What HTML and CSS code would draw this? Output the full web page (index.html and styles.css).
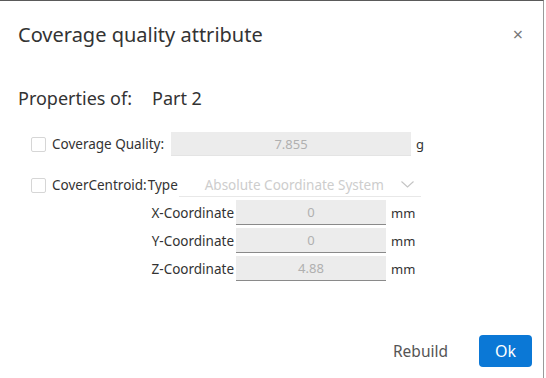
FILE: index.html
```html
<!DOCTYPE html>
<html lang="en">
<head>
    <meta charset="UTF-8">
    <title>Coverage quality attribute</title>
    <link rel="stylesheet" href="styles.css">
</head>
<body>
    <div class="dialog">
        <div class="dialog-header">
            <h2 class="dialog-title">Coverage quality attribute</h2>
            <span class="close-btn">&times;</span>
        </div>

        <div class="props-title">Properties of:<span class="part-name">Part 2</span></div>

        <div class="form-row">
            <span class="check"></span>
            <span class="row-label">Coverage Quality:</span>
            <div class="field field-wide">7.855</div>
            <span class="unit">g</span>
        </div>

        <div class="form-row row-centroid">
            <span class="check"></span>
            <span class="row-label">CoverCentroid:</span>
            <span class="type-label">Type</span>
            <div class="select">
                <span>Absolute Coordinate System</span>
                <svg class="chevron" width="13" height="7" viewBox="0 0 13 7"><path d="M0.5 0.5 L6.5 6 L12.5 0.5" fill="none" stroke="#c4c4c4" stroke-width="1.1"/></svg>
            </div>
        </div>

        <div class="coord-list">
            <div class="coord-row">
                <span class="coord-label">X-Coordinate</span>
                <div class="field field-coord">0</div>
                <span class="unit">mm</span>
            </div>
            <div class="coord-row">
                <span class="coord-label">Y-Coordinate</span>
                <div class="field field-coord">0</div>
                <span class="unit">mm</span>
            </div>
            <div class="coord-row">
                <span class="coord-label">Z-Coordinate</span>
                <div class="field field-coord">4.88</div>
                <span class="unit">mm</span>
            </div>
        </div>

        <div class="dialog-footer">
            <button type="button" class="btn-text">Rebuild</button>
            <button type="button" class="btn-primary">Ok</button>
        </div>
    </div>
</body>
</html>
```

FILE: styles.css
```css
body {
    margin: 0;
    font-family: "Noto Sans", Arial, sans-serif;
    background-color: #fff;
    color: #333;
}
.dialog {
    width: 543px;
    height: 377px;
    border-top: 1px solid #5a5a5a;
    border-right: 1px solid #9a9a9a;
    position: relative;
}
.dialog-header {
    display: flex;
    align-items: center;
    justify-content: space-between;
    padding: 19px 18px 0 18px;
    height: 28px;
}
.dialog-title {
    margin: 0;
    font-size: 20px;
    font-weight: normal;
    color: #333;
}
.close-btn {
    font-size: 18px;
    color: #777;
    margin-right: 2px;
}
.props-title {
    margin: 38px 0 0 18px;
    font-size: 18px;
    color: #333;
    height: 24px;
    line-height: 24px;
}
.part-name {
    margin-left: 20px;
}
.form-row {
    display: flex;
    align-items: center;
    margin: 22px 0 0 31px;
    font-size: 13.5px;
    color: #333;
    height: 24px;
}
.row-centroid {
    margin-top: 17px;
}
.check {
    width: 13px;
    height: 13px;
    border: 1px solid #d6d6d6;
    border-radius: 2px;
    margin-right: 6px;
}
.row-label {
    width: 119px;
}
.row-centroid .row-label {
    width: auto;
}
.type-label {
    margin-left: 1px;
    width: 31px;
}
.field {
    background-color: #ececec;
    color: #b0b0b0;
    text-align: center;
    font-size: 13px;
    height: 24px;
    line-height: 24px;
    box-sizing: border-box;
}
.field-wide {
    width: 240px;
    border-bottom: 1px solid #e4e4e4;
}
.unit {
    margin-left: 5px;
    font-size: 13px;
}
.select {
    width: 242px;
    height: 24px;
    display: flex;
    align-items: center;
    justify-content: space-between;
    border-bottom: 1px solid #e8e8e8;
    color: #cdcdcd;
    padding-left: 26px;
    padding-right: 7px;
    box-sizing: border-box;
}
.coord-list {
    display: flex;
    flex-direction: column;
    gap: 3px;
    margin-top: 3px;
}
.coord-row {
    display: flex;
    align-items: center;
    font-size: 13.5px;
}
.coord-label {
    width: 234px;
    text-align: right;
    margin-right: 2px;
}
.field-coord {
    width: 150px;
    height: 25px;
    line-height: 25px;
    border-bottom: 1px solid #8a8a8a;
}
.dialog-footer {
    position: absolute;
    right: 11px;
    bottom: 11px;
    display: flex;
    align-items: center;
    gap: 31px;
}
.btn-text {
    border: none;
    background: none;
    font-family: inherit;
    font-size: 15.5px;
    color: #555;
    padding: 0;
}
.btn-primary {
    border: none;
    background-color: #0b78d6;
    color: #fff;
    font-family: inherit;
    font-size: 16px;
    width: 53px;
    height: 32px;
    border-radius: 4px;
    padding: 0;
}
```
